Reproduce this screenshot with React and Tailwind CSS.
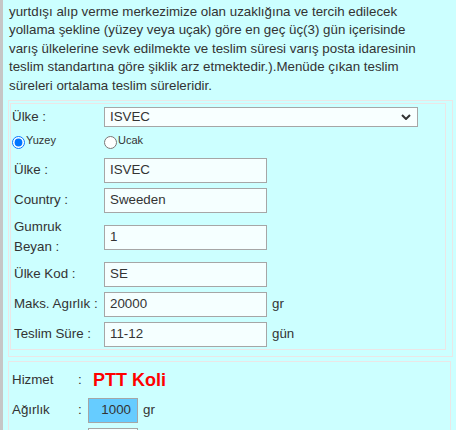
import React from 'react';

const lines = [
  "yurtdışı alıp verme merkezimize olan uzaklığına ve tercih edilecek",
  "yollama şekline (yüzey veya uçak) göre en geç üç(3) gün içerisinde",
  "varış ülkelerine sevk edilmekte ve teslim süresi varış posta idaresinin",
  "teslim standartına göre şiklik arz etmektedir.).Menüde çıkan teslim",
  "süreleri ortalama teslim süreleridir.",
];

function Field({ label, value, unit, tall }) {
  return (
    <div className={"flex items-center " + (tall ? "h-[44px]" : "h-[30px]")}>
      <div className="w-[92px] pl-[2px] leading-[20px]">{label}</div>
      <div className="w-[163px] h-[25px] border border-[#a6a6a6] bg-[#f5ffff] pl-[5px] flex items-center">
        {value}
      </div>
      {unit && <span className="ml-[5px]">{unit}</span>}
    </div>
  );
}

export default function App() {
  return (
    <div
      className="w-[456px] h-[430px] overflow-hidden bg-[#ccffff] border-l-[3px] border-[#c6c6c6] text-[13.33px] text-[#333333]"
      style={{ fontFamily: '"Liberation Sans", Arial, sans-serif' }}
    >
      <div className="pt-[3px] pl-[6px] leading-[18.4px]">
        {lines.map((l, i) => (
          <div key={i} className="whitespace-nowrap">{l}</div>
        ))}
      </div>

      {/* outer box */}
      <div className="mt-[5px] ml-[5px] w-[445px] border border-[#ebe6e6] pl-[1px] pr-[6px] pt-[2px] pb-[6px]">
        {/* inner table */}
        <div className="border border-[#ebe6e6] pl-[1px]">
          <div className="flex items-center h-[26px]">
            <div className="w-[92px]">Ülke :</div>
            <div className="w-[314px] h-[20px] border border-[#a6a6a6] bg-[#f8ffff] pl-[5px] pr-[6px] flex items-center justify-between">
              <span>ISVEC</span>
              <svg width="10" height="6" viewBox="0 0 10 6">
                <path d="M1 1 L5 5 L9 1" fill="none" stroke="#333" strokeWidth="2" />
              </svg>
            </div>
          </div>
          <div className="flex items-start h-[25px] pt-[3px]">
            <div className="w-[92px] flex items-start">
              <input type="radio" name="t" defaultChecked className="m-0 w-[13px] h-[13px] mt-[3px]" />
              <span className="text-[11px] leading-none ml-[1px] mt-[2px]">Yuzey</span>
            </div>
            <div className="flex items-start">
              <input type="radio" name="t" className="m-0 w-[13px] h-[13px] mt-[3px]" />
              <span className="text-[11px] leading-none ml-[1px] mt-[2px]">Ucak</span>
            </div>
          </div>
          <Field label="Ülke :" value="ISVEC" />
          <Field label="Country :" value="Sweeden" />
          <Field label={<>Gumruk<br />Beyan :</>} value="1" tall />
          <Field label="Ülke Kod :" value="SE" />
          <Field label="Maks. Agırlık :" value="20000" unit="gr" />
          <Field label="Teslim Süre :" value="11-12" unit="gün" />
        </div>
      </div>

      {/* second box */}
      <div className="mt-[4px] ml-[5px] w-[443px] h-[80px] border border-[#ebe6e6] pt-[3px] pl-[3px]">
        <div className="flex items-center h-[30px]">
          <div className="w-[66px]">Hizmet</div>
          <div className="w-[15px]">:</div>
          <span className="text-[18px] font-bold text-[#ff0000]">PTT Koli</span>
        </div>
        <div className="flex items-center h-[30px]">
          <div className="w-[66px]">Ağırlık</div>
          <div className="w-[10px]">:</div>
          <div className="w-[50px] h-[25px] border border-[#a6a6a6] bg-[#66ccff] pr-[6px] flex items-center justify-end">1000</div>
          <span className="ml-[5px]">gr</span>
        </div>
        <div className="flex items-center h-[30px]">
          <div className="w-[66px]"></div>
          <div className="w-[10px]"></div>
          <div className="w-[50px] h-[25px] border border-[#a6a6a6] bg-[#f5ffff]"></div>
        </div>
      </div>
    </div>
  );
}
